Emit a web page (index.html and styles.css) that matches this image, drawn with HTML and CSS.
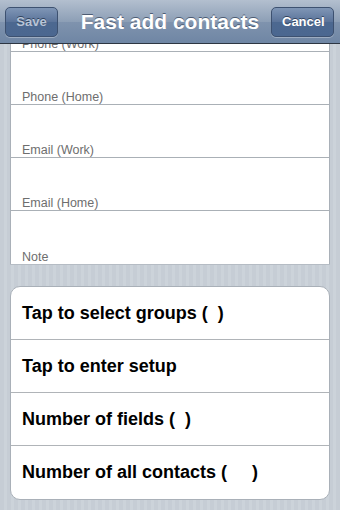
FILE: index.html
```html
<!DOCTYPE html>
<html lang="en">
<head>
    <meta charset="UTF-8">
    <meta name="viewport" content="width=device-width, initial-scale=1.0">
    <title>Fast add contacts</title>
    <link rel="stylesheet" href="styles.css">
</head>
<body>
    <div class="screen">
        <div class="navbar">
            <button class="nav-button save disabled">Save</button>
            <h1>Fast add contacts</h1>
            <button class="nav-button cancel">Cancel</button>
        </div>
        <div class="content">
            <!-- fields list is scrolled, first row sits under the nav bar -->
            <ul class="fields">
                <li>Phone (Work)</li>
                <li>Phone (Home)</li>
                <li>Email (Work)</li>
                <li>Email (Home)</li>
                <li>Note</li>
            </ul>
            <ul class="group">
                <li>Tap to select groups (&nbsp;&nbsp;)</li>
                <li>Tap to enter setup</li>
                <li>Number of fields (&nbsp;&nbsp;)</li>
                <li>Number of all contacts (&nbsp;&nbsp;&nbsp;&nbsp;&nbsp;)</li>
            </ul>
        </div>
    </div>
</body>
</html>
```

FILE: styles.css
```css
body {
    margin: 0;
    font-family: "Liberation Sans", Arial, sans-serif;
}
.screen {
    width: 340px;
    height: 510px;
    overflow: hidden;
    display: flex;
    flex-direction: column;
    background: repeating-linear-gradient(90deg, #c6cdd5 0, #c6cdd5 4px, #ccd3da 4px, #ccd3da 7px);
}
.navbar {
    height: 44px;
    flex-shrink: 0;
    display: grid;
    grid-template-columns: 1fr auto 1fr;
    align-items: center;
    padding: 0 6px 0 5px;
    box-sizing: border-box;
    background: linear-gradient(#b3bfcf, #8d9fb6 50%, #7f93ae 51%, #6f86a4);
    border-bottom: 1px solid #2d3642;
    position: relative;
    z-index: 2;
}
.navbar h1 {
    margin: 0 0 0 1px;
    color: white;
    font-size: 21px;
    font-weight: bold;
    text-shadow: 0 -1px 0 #4d5c73;
}
.nav-button {
    height: 30px;
    padding: 0 10px;
    border: 1px solid #3d5170;
    border-radius: 5px;
    background: linear-gradient(#7f96b6, #5a7399 50%, #4c6890 51%, #4b6790);
    color: white;
    font-family: "Liberation Sans", Arial, sans-serif;
    font-size: 13px;
    font-weight: bold;
    text-shadow: 0 -1px 0 #334560;
    box-shadow: 0 1px 0 rgba(255, 255, 255, 0.3);
}
.nav-button.save {
    justify-self: start;
    width: 53px;
}
.nav-button.cancel {
    justify-self: end;
    width: 63px;
}
.nav-button.disabled {
    color: #b8c4d6;
}
.content {
    flex: 1;
    overflow: hidden;
}
.fields {
    list-style-type: none;
    margin: -45px 10px 0 10px;
    padding: 0;
    background-color: white;
    border-left: 1px solid #a9b0b8;
    border-right: 1px solid #a9b0b8;
    box-shadow: 0 1px 0 #b5bcc4;
}
.fields li {
    height: 53px;
    box-sizing: border-box;
    border-bottom: 1px solid #aab0b6;
    display: flex;
    align-items: flex-end;
    padding: 0 0 0 11px;
    font-size: 12.5px;
    color: #6e6e6e;
}
.fields li:last-child {
    border-bottom: none;
}
.group {
    list-style-type: none;
    margin: 22px 10px 0 10px;
    padding: 0;
    background-color: white;
    border: 1px solid #a9b0b8;
    border-radius: 10px;
}
.group li {
    height: 53px;
    box-sizing: border-box;
    border-bottom: 1px solid #b0b4b8;
    display: flex;
    align-items: center;
    padding-left: 11px;
    font-size: 18px;
    font-weight: bold;
    color: black;
}
.group li:last-child {
    border-bottom: none;
}
```
